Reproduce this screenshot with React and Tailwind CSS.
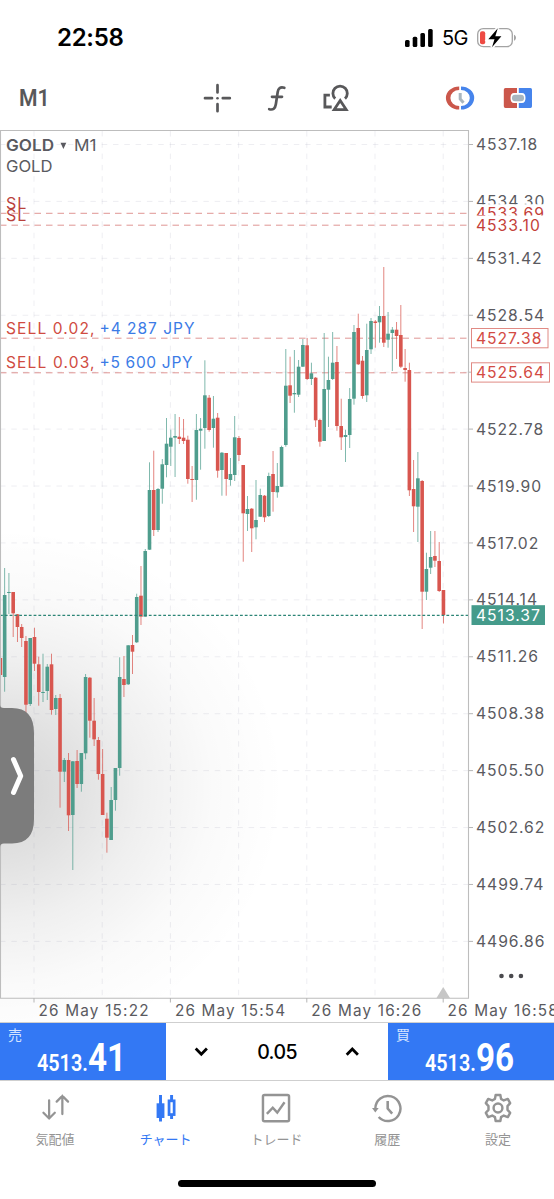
import React from "react";

const UP = "#4f9d8d";
const DOWN = "#d8564f";
const STEP = 4.26;

// [direction, body top, body bottom, wick top, wick bottom]
const candles = [
  ["d", 658, 675, 658, 675], ["u", 595, 677, 568, 691.7], ["u", 592, 593, 573, 614],
  ["d", 592, 613.3, 592, 637], ["d", 614.3, 627, 614, 642], ["d", 627, 638, 624, 647],
  ["d", 641, 704.7, 636, 713], ["u", 638, 704, 638, 706], ["d", 637, 663.7, 627.7, 671],
  ["d", 664.3, 692, 656.7, 705.7], ["u", 692, 693, 653.7, 702], ["u", 666.7, 691, 664, 700],
  ["d", 664.3, 710, 653.7, 714.7], ["u", 698, 709, 695, 715], ["d", 698, 771.7, 694, 807.7],
  ["u", 760, 771.7, 758, 782], ["d", 760, 815.3, 753, 831], ["u", 761.3, 815, 761, 870],
  ["d", 761, 784, 750, 788], ["u", 753, 784, 753, 791.7], ["u", 677, 753.3, 674, 759.3],
  ["d", 677.7, 720.7, 677, 737.7], ["d", 720.7, 739.3, 698, 746], ["d", 740, 774, 737, 779.7],
  ["d", 774, 815, 749, 815], ["d", 818.7, 837.7, 812.7, 852.7], ["u", 800, 840, 787, 840],
  ["u", 768, 800, 768, 810.7], ["u", 677, 768, 657.3, 775.7], ["d", 679, 685, 656, 697],
  ["u", 645.3, 684.3, 645, 685], ["d", 645, 651.7, 635, 674], ["u", 597, 642.3, 593.7, 643],
  ["d", 595.7, 616.7, 566, 625], ["u", 551, 616.7, 549, 617], ["u", 490, 549.7, 462.3, 550],
  ["d", 490, 530, 450.7, 536], ["u", 489, 530, 488, 532], ["u", 464.3, 488.7, 459, 503.7],
  ["u", 443.7, 465, 418, 477.3], ["u", 437.7, 446.7, 429.7, 466], ["u", 436, 437.7, 414, 477],
  ["d", 436.7, 439, 417, 444], ["d", 437.7, 441, 419, 444], ["d", 439.7, 479, 435.7, 483.7],
  ["d", 479, 480, 466, 502], ["u", 430, 480, 414, 499.7], ["u", 428.7, 430.7, 418, 469.7],
  ["u", 395.3, 428, 360.3, 448.7], ["d", 397.7, 430, 395, 431.7], ["u", 418.7, 428, 396, 447.7],
  ["d", 417.7, 470.7, 413, 477.7], ["u", 452.7, 470, 452, 495.7], ["d", 453, 479, 453, 495.7],
  ["u", 474, 480, 458, 485.7], ["u", 437.3, 475, 416, 481], ["d", 438, 455, 436, 461],
  ["d", 465, 513.3, 465, 561.7], ["u", 509, 514, 496, 531], ["d", 508.7, 528.3, 508, 552],
  ["u", 520, 527.3, 480, 539.3], ["u", 495, 516.7, 488.7, 517], ["d", 495.7, 517.3, 495, 522],
  ["u", 476, 516, 472.7, 517], ["d", 474, 492, 451, 511.7], ["u", 486, 492.3, 463, 497.7],
  ["u", 447, 486.7, 445.7, 487], ["u", 385.7, 445, 349, 446.7], ["d", 385.3, 395.7, 356.7, 403],
  ["u", 393, 394.3, 350, 412.7], ["u", 366.7, 394.7, 360, 397], ["u", 345, 366.7, 339, 367],
  ["d", 345.3, 379, 338, 380], ["u", 373.3, 379, 362.7, 385], ["d", 377.7, 420.3, 377, 427],
  ["d", 420, 441.7, 418.7, 446.7], ["u", 389, 441, 333, 441], ["u", 380, 389.7, 356.7, 427],
  ["u", 362.7, 379, 332, 380], ["d", 362, 426, 346, 430.7], ["d", 426, 437.3, 398.7, 450],
  ["u", 435, 437, 429.7, 462], ["u", 399, 435, 388, 448], ["u", 332, 398.7, 325, 404.7],
  ["d", 328, 364.3, 313.7, 365], ["d", 360.7, 396, 356, 398.7], ["u", 350, 395.3, 323.7, 402],
  ["u", 321, 349.3, 318, 354], ["d", 321.5, 323, 320, 347.7], ["u", 316, 322.3, 306, 342.7],
  ["d", 316, 342.7, 267, 347], ["u", 333.7, 339.7, 312, 347.7], ["u", 329.7, 333, 327, 371],
  ["d", 329.7, 336, 322, 359], ["d", 335, 366.7, 305, 368], ["d", 368, 370, 349, 381.7],
  ["d", 370, 490.3, 362.7, 496], ["d", 489, 506.3, 460, 532], ["u", 478.3, 506.7, 452, 542],
  ["d", 481, 591.7, 480, 629], ["u", 569, 591.7, 552.7, 600], ["u", 557, 567.7, 531, 574],
  ["d", 556, 560.7, 531, 567], ["d", 561, 591, 542, 592], ["d", 590, 615, 590, 623.5],
];

const gridX = [34, 102.2, 170.4, 238.6, 306.8, 375, 443.2];
const gridY = Array.from({ length: 15 }, (_, i) => 144.5 + i * 56.92);
const prices = [
  [0, "4537.18"], [2, "4531.42"], [3, "4528.54"], [5, "4522.78"], [6, "4519.90"],
  [7, "4517.02"], [8, "4514.14"], [9, "4511.26"], [10, "4508.38"], [11, "4505.50"],
  [12, "4502.62"], [13, "4499.74"], [14, "4496.86"],
];
const times = [[38.5, "26 May 15:22"], [175, "26 May 15:54"], [311.3, "26 May 16:26"], [447.6, "26 May 16:58"]];

function PriceChart() {
  return (
    <svg className="block h-[892px] w-[554px] font-['Inter',sans-serif]" viewBox="0 130 554 892" fontSize="16">
      <defs>
        <radialGradient id="shade" gradientUnits="userSpaceOnUse" cx="0" cy="0" r="1" gradientTransform="translate(0 790) rotate(-6) scale(285 262)">
          <stop offset="0" stopColor="#000" stopOpacity="0.17" />
          <stop offset="0.25" stopColor="#000" stopOpacity="0.12" />
          <stop offset="0.5" stopColor="#000" stopOpacity="0.062" />
          <stop offset="0.75" stopColor="#000" stopOpacity="0.02" />
          <stop offset="1" stopColor="#000" stopOpacity="0" />
        </radialGradient>
        <clipPath id="clip1"><rect x="470" y="190" width="84" height="14.2" /></clipPath>
        <clipPath id="clip2"><rect x="470" y="204" width="84" height="11.5" /></clipPath>
      </defs>
      <rect x="0" y="500" width="300" height="522" fill="url(#shade)" />
      <g stroke="#9a9ab0" strokeOpacity="0.17" strokeDasharray="5.5 5.8">
        {gridX.map((x) => <path key={x} d={`M${x} 131V998`} />)}
        {gridY.map((y) => <path key={y} d={`M0 ${y}H468`} />)}
      </g>

      <g stroke="#c94a46" strokeOpacity="0.58" strokeDasharray="6.5 5">
        <path d="M0 213.3H468M0 225.2H468M0 338.2H468M0 372.8H468" />
      </g>

      {candles.map(([dir, top, bottom, high, low], i) => {
        const x = 0.4 + i * STEP;
        const color = dir === "u" ? UP : DOWN;
        return (
          <g key={i} fill={color}>
            <rect x={x - 0.45} y={high} width="0.9" height={low - high} opacity="0.8" />
            <rect x={x - 1.8} y={top} width="3.6" height={bottom - top} />
          </g>
        );
      })}
      <path d="M0 615.3H468" stroke="#2c8576" strokeWidth="1.2" strokeDasharray="2.8 2" />

      <path d="M0.5 130.5H468.5V998.3H0.5Z" fill="none" stroke="#bdbdbd" strokeWidth="1.1" />
      <path d="M436.5 998L443.2 987L450 998Z" fill="#c6c6c6" />
      <g stroke="#b5b5b5">
        {gridY.map((y) => <path key={y} d={`M469 ${y}h4`} />)}
        {[34, 170.4, 306.8, 443.2].map((x) => <path key={x} d={`M${x} 998v4.5`} />)}
      </g>

      <g fill="#5a5a60">
        <text x="6" y="150.6" fontWeight="600" textLength="48" lengthAdjust="spacingAndGlyphs">GOLD</text>
        <text x="74" y="150.6" textLength="22.5" lengthAdjust="spacingAndGlyphs">M1</text>
        <path d="M60.5 142.8h5.8l-2.9 6.2z" />
        <text x="6" y="171.5" textLength="46.5" lengthAdjust="spacingAndGlyphs">GOLD</text>
      </g>
      <g fill="#b9413c" letterSpacing="1.1">
        <text x="6" y="208.6">SL</text>
        <text x="6" y="220.6">SL</text>
      </g>
      <g fill="#d04b41" fontSize="15.5">
        <text x="6" y="333.6" textLength="88.5">SELL 0.02,</text>
        <text x="6" y="368" textLength="88.5">SELL 0.03,</text>
      </g>
      <g fill="#3b7be6" fontSize="15.5">
        <text x="99.5" y="333.6" textLength="95">+4 287 JPY</text>
        <text x="99.5" y="368" textLength="93">+5 600 JPY</text>
      </g>

      <g fill="#5a5a60" fontSize="15.7" letterSpacing="0.95">
        {prices.map(([i, t]) => <text key={t} x="476" y={gridY[i] + 5.6}>{t}</text>)}
        {times.map(([x, t]) => <text key={t} x={x} y="1016" fontSize="15.3" textLength="111">{t}</text>)}
        <text x="476" y="207" clipPath="url(#clip1)">4534.30</text>
      </g>
      <g fill="#c43f39" fontSize="15.7" letterSpacing="0.95">
        <text x="476" y="219" clipPath="url(#clip2)">4533.69</text>
        <text x="476" y="231">4533.10</text>
      </g>
      <g fill="#fff" stroke="#e08a84">
        <rect x="471.5" y="328.5" width="76.5" height="19.3" />
        <rect x="471.5" y="362.8" width="78" height="19.3" />
      </g>
      <g fill="#d34b43" fontSize="15.7" letterSpacing="0.95">
        <text x="476" y="344">4527.38</text>
        <text x="476" y="378.4">4525.64</text>
      </g>
      <rect x="471.5" y="605.2" width="73.5" height="19.8" fill="#459b8b" />
      <text x="476" y="620.9" fill="#fff" fontSize="15.7" letterSpacing="0.95">4513.37</text>
      <g fill="#4a4a4e">
        <circle cx="501.5" cy="976" r="2.3" />
        <circle cx="511.2" cy="976" r="2.3" />
        <circle cx="520.9" cy="976" r="2.3" />
      </g>
      <path d="M0 705Q0 708 4 708H12Q34 708 34 733V819Q34 843.5 12 843.5H4Q0 843.5 0 847Z" fill="#7c7c7c" />
      <path d="M13.5 759.5L20.7 776L13.5 792.5" fill="none" stroke="#fff" strokeWidth="5" strokeLinecap="round" strokeLinejoin="round" />
    </svg>
  );
}

function StatusBar() {
  return (
    <header className="flex h-[66px] items-center justify-between pt-[9px] pr-[37px] pl-[57px]">
      <time className="font-['Inter',sans-serif] text-[24px] leading-none font-semibold tracking-[-0.3px] text-black">22:58</time>
      <div className="flex items-center">
        <svg className="h-[18px] w-7" viewBox="0 0 28 18">
          <rect x="0" y="11" width="4.6" height="7" rx="1.5" />
          <rect x="7.7" y="7.7" width="4.6" height="10.3" rx="1.5" />
          <rect x="15.4" y="4" width="4.6" height="14" rx="1.5" />
          <rect x="23.1" y="0" width="4.6" height="18" rx="1.5" />
        </svg>
        <span className="ml-[9px] w-[27px] font-['Inter',sans-serif] text-[20px] leading-none tracking-[-0.6px]">5G</span>
        <svg className="ml-2 h-[22px] w-10" viewBox="0 0 40 22">
          <rect x="0.7" y="1.7" width="34.6" height="18" rx="5.5" fill="#fff" stroke="#a3a3a3" strokeWidth="1.3" />
          <rect x="3" y="4.2" width="5.2" height="13" rx="2" fill="#ee4a43" />
          <path d="M37 7.7c2.6 1 2.6 5 0 6z" fill="#a3a3a3" />
          <path d="M20.8 1.2L11.3 12.2h6.2L15 20.3L24.4 9.2h-6.1z" fill="#000" stroke="#fff" strokeWidth="3.4" paintOrder="stroke" />
        </svg>
      </div>
    </header>
  );
}

function Toolbar() {
  return (
    <div className="flex h-16 items-center">
      <button className="ml-[19px] w-8 origin-left scale-x-[0.92] text-left font-['Roboto',sans-serif] text-[23px] leading-none font-semibold text-[#58585a]">M1</button>
      <svg className="ml-[151px] h-[30px] w-[30px]" viewBox="0 0 30 30" stroke="#58585a" strokeWidth="2.7" strokeLinecap="round">
        <path d="M15.5 2.2v7.2M15.5 21.2v7M3 15.2h7M20.8 15.2h7" /><circle cx="15.5" cy="15.2" r="1.3" fill="#58585a" stroke="none" />
      </svg>
      <svg className="ml-[35px] h-[30px] w-5" viewBox="0 0 20 30" fill="none" stroke="#58585a" strokeWidth="2.7" strokeLinecap="round">
        <path d="M17.3 4.8C13.2 3.6 11.2 5.4 10.7 9L8.9 21C8.2 25.6 6.2 27.2 2.2 26.2M5 13.8h10" />
      </svg>
      <svg className="ml-[34px] h-[30px] w-[30px]" viewBox="0 0 30 30" fill="none" stroke="#58585a" strokeWidth="2.8">
        <path d="M8.9 12.2H3.9V24H10.7" />
        <path d="M14.2 15.6A7.2 7.2 0 1 1 24 15.6" />
        <path d="M19.2 17.5L25.2 26.6H13.2Z" />
      </svg>
      <svg className="ml-[94px] h-7 w-[30px]" viewBox="0 0 30 28" fill="none">
        <path d="M14.2 2.4A13.3 11.6 0 0 0 14.2 25.6V22.1A8.8 8.1 0 0 1 14.2 5.9Z" fill="#cb574b" />
        <path d="M16 2.4A13.2 11.6 0 0 1 16 25.6V22.1A8.8 8.1 0 0 0 16 5.9Z" fill="#4684ec" />
        <path d="M15.2 9v6l3.3 3.8" stroke="#a9b6bf" strokeWidth="3" />
      </svg>
      <svg className="ml-7 h-7 w-[30px]" viewBox="0 0 30 28">
        <path d="M2.5 4H14V9H11Q7.5 9 7.5 14T11 19H14V24H2.5Q0.8 24 0.8 22.3V5.7Q0.8 4 2.5 4Z" fill="#cb574b" />
        <path d="M27.5 4H15.8V9H19Q22.5 9 22.5 14T19 19H15.8V24H27.5Q29 24 29 22.3V5.7Q29 4 27.5 4Z" fill="#4684ec" />
        <rect x="9" y="10.7" width="12" height="6.6" rx="3" fill="#a9b6bf" />
      </svg>
    </div>
  );
}

function Quote({ label, cents }) {
  return (
    <button className="relative flex h-[57px] w-[166px] flex-none items-end bg-[#3378f4] pb-[5px] pl-[37px] text-left font-['Roboto',sans-serif] text-white">
      <span className="absolute top-[3px] left-2 font-['Noto_Sans_CJK_JP',sans-serif] text-[14px] leading-[16px] text-[#d6e4ff]">{label}</span>
      <span className="flex items-baseline whitespace-nowrap">
        <span className="block w-[51px] origin-left scale-x-[0.86] text-[23px] leading-none font-semibold">4513.</span>
        <span className="block w-10 origin-left scale-x-[0.84] text-[39.5px] leading-[34px] font-bold">{cents}</span>
      </span>
    </button>
  );
}

function TradeBar() {
  return (
    <div className="flex h-[59px] border-y border-[#cfcfcf] bg-white">
      <Quote label="売" cents="41" />
      <div className="flex flex-1 items-center justify-between px-7">
        <svg className="h-4 w-[15px]" viewBox="0 0 15 16" fill="none" stroke="#000" strokeWidth="2.8"><path d="M1.7 4.5L7.3 10.2L12.9 4.5" /></svg>
        <span className="pt-[3px] font-['Inter',sans-serif] text-[19.5px] font-medium tracking-[-0.6px] text-black">0.05</span>
        <svg className="h-4 w-[15px]" viewBox="0 0 15 16" fill="none" stroke="#000" strokeWidth="2.8"><path d="M1.7 10.7L7.3 5L12.9 10.7" /></svg>
      </div>
      <Quote label="買" cents="96" />
    </div>
  );
}

const tabs = [
  ["気配値", <path d="M9.3 7.5V26M3.5 20.2L9.3 26L15.1 20.2M22.8 21.5V3M17 8.8L22.8 3L28.6 8.8" strokeWidth="2.3" />],
  ["チャート", <g><path d="M9.7 2v27M21 2v24.5" strokeWidth="3" strokeLinecap="butt" /><rect x="5.7" y="10.5" width="8" height="15" fill="currentColor" stroke="none" /><rect x="18.4" y="8" width="5.2" height="14" fill="#fff" strokeWidth="2.8" /></g>],
  ["トレード", <g strokeLinecap="butt"><rect x="2" y="2" width="26.6" height="26.8" rx="1.6" strokeWidth="2.5" /><path d="M6 21.3L12 15L16.6 20L24 9.5" strokeWidth="2.5" /></g>],
  ["履歴", <g><path d="M3.4 15.8A12.8 12.8 0 1 1 6.8 24.5" strokeWidth="2.5" strokeLinecap="butt" /><path d="M0 15.3L6.8 15.3L3.4 19.8Z" fill="currentColor" stroke="none" /><path d="M16 8.2V15.8L20.6 21" strokeWidth="2.6" strokeLinecap="butt" /></g>],
  ["設定", <g strokeWidth="2.5"><circle cx="15.3" cy="15.3" r="4.5" /><path d="M12.9 2H17.7L18.4 6L21.2 7.6L25.3 6L27.7 10.3L25 13.4V17.2L27.7 20.2L25.3 24.6L21.2 23L18.4 24.6L17.7 28.6H12.9L12.2 24.6L9.4 23L5.3 24.6L2.9 20.2L5.6 17.2V13.4L2.9 10.3L5.3 6L9.4 7.6L12.2 6Z" strokeLinejoin="round" /></g>],
];

function TabBar() {
  return (
    <nav className="grid h-[118px] grid-cols-5 content-start pt-3">
      {tabs.map(([label, icon], i) => (
        <a key={label} className={i === 1 ? "flex flex-col items-center pr-px text-[#3378f4]" : "flex flex-col items-center pr-px text-[#949494]"}>
          <svg className="h-[30px] w-[30px]" viewBox="0 0 30.6 30.6" fill="none" stroke="currentColor" strokeLinecap="round">{icon}</svg>
          <span className="mt-[7px] font-['Noto_Sans_CJK_JP',sans-serif] text-[13px] leading-[18px]">{label}</span>
        </a>
      ))}
    </nav>
  );
}

export default function App() {
  return (
    <main className="flex h-[1199px] w-[554px] flex-col overflow-hidden bg-white">
      <StatusBar />
      <Toolbar />
      <PriceChart />
      <TradeBar />
      <div className="relative">
        <TabBar />
        <div className="absolute top-[99px] left-[178px] h-[7px] w-[198px] rounded-full bg-black" />
      </div>
    </main>
  );
}
